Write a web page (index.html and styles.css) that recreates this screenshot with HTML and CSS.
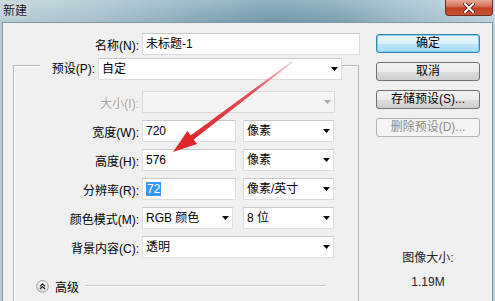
FILE: index.html
```html
<!DOCTYPE html>
<html lang="zh-CN">
<head>
    <meta charset="UTF-8">
    <meta name="viewport" content="width=device-width, initial-scale=1.0">
    <title>新建</title>
    <link rel="stylesheet" href="styles.css">
</head>
<body>

<div class="window">
    <div class="titlebar">
        <span class="title">新建</span>
        <button class="close" aria-label="关闭">
            <svg width="12" height="10" viewBox="0 0 12 10">
                <path d="M2 1 L10 9 M10 1 L2 9" stroke="#4a1a10" stroke-width="3.6" stroke-linecap="square"/>
                <path d="M2 1 L10 9 M10 1 L2 9" stroke="#fff" stroke-width="2" stroke-linecap="square"/>
            </svg>
        </button>
    </div>

    <div class="client">
        <div class="main">
            <div class="row">
                <label class="label">名称(N):</label>
                <div class="field name-field">未标题-1</div>
            </div>

            <div class="group">
                <div class="group-head">
                    <label class="label head-label">预设(P):</label>
                    <div class="field select preset">自定<span class="caret"></span></div>
                </div>

                <div class="grow first">
                    <label class="label disabled">大小(I):</label>
                    <div class="field select size is-disabled"><span class="caret"></span></div>
                </div>
                <div class="grow">
                    <label class="label">宽度(W):</label>
                    <div class="field num">720</div>
                    <div class="field select unit">像素<span class="caret"></span></div>
                </div>
                <div class="grow">
                    <label class="label">高度(H):</label>
                    <div class="field num">576</div>
                    <div class="field select unit">像素<span class="caret"></span></div>
                </div>
                <div class="grow">
                    <label class="label">分辨率(R):</label>
                    <div class="field num"><span class="selected">72</span></div>
                    <div class="field select unit">像素/英寸<span class="caret"></span></div>
                </div>
                <div class="grow">
                    <label class="label">颜色模式(M):</label>
                    <div class="field select mode">RGB 颜色<span class="caret"></span></div>
                    <div class="field select unit">8 位<span class="caret"></span></div>
                </div>
                <div class="grow">
                    <label class="label">背景内容(C):</label>
                    <div class="field select bg">透明<span class="caret"></span></div>
                </div>

                <div class="advanced">
                    <svg class="adv-icon" width="13" height="13" viewBox="0 0 13 13">
                        <defs>
                            <linearGradient id="advFill" x1="0" y1="0" x2="0" y2="1">
                                <stop offset="0" stop-color="#ffffff"/>
                                <stop offset="1" stop-color="#d9d9d9"/>
                            </linearGradient>
                        </defs>
                        <circle cx="6.5" cy="6.5" r="5.8" fill="url(#advFill)" stroke="#9a9a9a"/>
                        <path d="M4 6.3 L6.5 3.8 L9 6.3 M4 9 L6.5 6.5 L9 9" fill="none" stroke="#222" stroke-width="1.2"/>
                    </svg>
                    <span>高级</span>
                    <span class="adv-line"></span>
                </div>
            </div>
        </div>

        <div class="side">
            <button class="btn default">确定</button>
            <button class="btn">取消</button>
            <button class="btn">存储预设(S)...</button>
            <button class="btn" disabled>删除预设(D)...</button>
            <div class="info">
                <div>图像大小:</div>
                <div>1.19M</div>
            </div>
        </div>
    </div>

    <!-- red annotation arrow -->
    <svg class="arrow" width="495" height="301" viewBox="0 0 495 301">
        <defs>
            <linearGradient id="shaft" gradientUnits="userSpaceOnUse" x1="292" y1="62" x2="190" y2="138">
                <stop offset="0" stop-color="#f0a0b0" stop-opacity="0.6"/>
                <stop offset="0.35" stop-color="#e6505e"/>
                <stop offset="1" stop-color="#e2262e"/>
            </linearGradient>
        </defs>
        <polygon points="292.4,62.4 291.6,61.6 189.2,136.6 192.4,140.4" fill="url(#shaft)"/>
        <polygon points="173,152 197,143.9 187.4,131.1" fill="#e3262b"/>
    </svg>
</div>

</body>
</html>
```

FILE: styles.css
```css
body {
    margin: 0;
    font-family: "Liberation Sans", "Noto Sans CJK SC", sans-serif;
    font-size: 12px;
    color: #000;
    overflow: hidden;
}
.window {
    position: relative;
    width: 495px;
    height: 301px;
    overflow: hidden;
    background: linear-gradient(90deg, #b9ccd5 0%, #a8c1cc 18%, #86aab9 38%, #6f98a9 55%, #7aa0b0 68%, #98b7c4 80%, #afc8d3 92%, #bdd2db 100%);
}
.titlebar {
    height: 22px;
    display: flex;
    align-items: flex-start;
    background: linear-gradient(180deg, rgba(255, 255, 255, 0.25), rgba(255, 255, 255, 0));
}
.title {
    padding: 4px 0 0 3px;
    line-height: 14px;
    color: #111;
    text-shadow: 0 0 5px #e8f0f4, 0 0 2px #e8f0f4;
}
.close {
    margin-left: auto;
    margin-right: 2px;
    width: 48px;
    height: 16px;
    padding: 0;
    border: 1px solid #6b2e22;
    border-top: none;
    border-radius: 0 0 4px 4px;
    background: linear-gradient(180deg, #e9a894 0%, #d7735b 40%, #c2401f 55%, #c9563a 100%);
    display: flex;
    align-items: center;
    justify-content: center;
}
.client {
    display: flex;
    margin: 0 2px;
    height: 300px;
    padding-top: 10px;
    box-sizing: border-box;
    background: #f0f0f0;
    border: 1px solid #7f96a4;
    border-bottom: none;
}
.main {
    width: 359px;
}
.row, .grow {
    display: flex;
    align-items: center;
    height: 22px;
}
.label {
    width: 136px;
    margin-right: 3px;
    text-align: right;
    white-space: nowrap;
}
.label.disabled {
    color: #a3a3a3;
    text-shadow: 1px 1px 0 #fff;
}
.field {
    box-sizing: border-box;
    height: 22px;
    line-height: 20px;
    padding: 0 3px;
    background: #fff;
    border: 1px solid #dedede;
    border-top-color: #c9c9c9;
    white-space: nowrap;
}
.select {
    display: flex;
    align-items: center;
}
.caret {
    margin-left: auto;
    width: 7px;
    height: 4px;
    background: #000;
    clip-path: polygon(0 0, 100% 0, 50% 100%);
}
.is-disabled {
    background: #f4f4f4;
    border-color: #d9d9d9;
}
.is-disabled .caret {
    background: #a8a8a8;
}
.name-field {
    width: 218px;
}
.group {
    margin: 10px 0 0 10px;
    width: 346px;
    height: 300px;
    box-sizing: border-box;
    border: 1px solid #b7b7b7;
    border-bottom: none;
    box-shadow: inset 1px 1px 0 #fff;
}
.group-head {
    display: flex;
    align-items: center;
    height: 22px;
    margin-top: -8px;
    padding-left: 26px;
}
.head-label {
    width: 58px;
    margin-right: 0;
    padding-right: 3px;
    box-sizing: border-box;
    background: #f0f0f0;
    line-height: 22px;
}
.preset {
    width: 244px;
}
.grow {
    margin-top: 7px;
}
.grow.first {
    margin-top: 11px;
}
.grow .label {
    width: 125px;
}
.size {
    width: 193px;
}
.num {
    width: 94px;
    margin-right: 7px;
}
.unit {
    width: 91px;
}
.mode {
    width: 91px;
    margin-right: 10px;
}
.bg {
    width: 192px;
}
.selected {
    background: #3399ff;
    color: #fff;
    padding: 0 1px;
    line-height: 14px;
    display: inline-block;
}
.advanced {
    display: flex;
    align-items: center;
    height: 16px;
    margin-top: 20px;
    padding-left: 22px;
    margin-right: 32px;
}
.adv-icon {
    margin-right: 6px;
}
.adv-line {
    flex: 1;
    margin-left: 6px;
    border-top: 1px solid #c6c6c6;
    border-bottom: 1px solid #fff;
}
.side {
    display: flex;
    flex-direction: column;
    gap: 9px;
    width: 104px;
    margin-left: 14px;
    padding-top: 1px;
}
.btn {
    height: 19px;
    padding: 0;
    font: inherit;
    line-height: 17px;
    color: #000;
    border: 1px solid #707070;
    border-radius: 3px;
    background: linear-gradient(180deg, #f2f2f2 0%, #ebebeb 50%, #dddddd 51%, #cfcfcf 100%);
}
.btn.default {
    border-color: #3c7fb1;
    background: linear-gradient(180deg, #eaf6fd 0%, #d9f0fc 50%, #bee6fd 51%, #a7d9f5 100%);
    box-shadow: inset 0 0 0 1px #7fd7f7;
}
.btn:disabled {
    color: #8a8a8a;
    border-color: #adb2b5;
    background: #f4f4f4;
}
.info {
    margin-top: 100px;
    text-align: center;
    line-height: 24px;
    color: #222;
}
.arrow {
    position: absolute;
    left: 0;
    top: 0;
    pointer-events: none;
}
```
